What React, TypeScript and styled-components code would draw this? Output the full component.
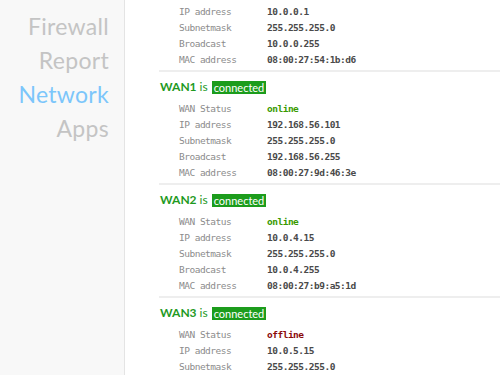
import styled, { createGlobalStyle } from 'styled-components';

const GlobalStyle = createGlobalStyle`
  html, body { margin: 0; padding: 0; background: #fff; }
  body { font-family: Lato, "Open Sans", sans-serif; overflow: hidden; }
`;

const Page = styled.div`
  display: flex;
  width: 500px;
  height: 375px;
  overflow: hidden;
`;

const Sidebar = styled.nav`
  width: 125px;
  flex-shrink: 0;
  background: #f8f8f8;
  border-right: 1px solid #e4e4e4;
  display: flex;
  flex-direction: column;
  align-items: flex-end;
  padding: 9px 15px 0 0;
  box-sizing: border-box;
`;

const NavItem = styled.a<{ $active?: boolean }>`
  font-family: Lato, "Open Sans", sans-serif;
  font-size: 23px;
  line-height: 34px;
  color: ${p => (p.$active ? '#7cc6fb' : '#c4c4c4')};
  text-decoration: none;
  letter-spacing: 0.3px;
`;

const Main = styled.main`
  flex: 1;
  padding-left: 34px;
  overflow: hidden;
`;

const Section = styled.section`
  border-bottom: 2px solid #eeeeee;
  padding-bottom: 3px;
  margin-bottom: 6px;
`;

const Header = styled.h3`
  margin: 0 0 4px 1px;
  font-family: Lato, "Open Sans", sans-serif;
  font-size: 12px;
  line-height: 18px;
  font-weight: 400;
  color: #1f9a1f;
  display: flex;
  align-items: center;
  gap: 3px;
`;

const Name = styled.b`
  font-weight: 700;
`;

const Badge = styled.span`
  background: #1c9c1c;
  color: #fff;
  font-size: 11px;
  line-height: 13px;
  padding: 0 2px;
  margin-left: 1px;
`;

const Rows = styled.div<{ $top?: number }>`
  padding-left: 20px;
  padding-top: ${p => p.$top ?? 0}px;
  display: grid;
  grid-template-columns: 88px 1fr;
  grid-auto-rows: 16px;
  align-items: center;
  font-family: "DejaVu Sans Mono", "Liberation Mono", monospace;
  font-size: 9.5px;
  letter-spacing: -0.5px;
`;

const Label = styled.span`
  color: #8c8c8c;
`;

const Value = styled.span<{ $tone?: 'online' | 'offline' }>`
  font-weight: 700;
  color: ${p => (p.$tone === 'online' ? '#3a9a00' : p.$tone === 'offline' ? '#8b0a0a' : '#4a4a4a')};
`;

type Row = [string, string, ('online' | 'offline')?];

const blocks: { name?: string; rows: Row[] }[] = [
  {
    rows: [
      ['IP address', '10.0.0.1'],
      ['Subnetmask', '255.255.255.0'],
      ['Broadcast', '10.0.0.255'],
      ['MAC address', '08:00:27:54:1b:d6'],
    ],
  },
  {
    name: 'WAN1',
    rows: [
      ['WAN Status', 'online', 'online'],
      ['IP address', '192.168.56.101'],
      ['Subnetmask', '255.255.255.0'],
      ['Broadcast', '192.168.56.255'],
      ['MAC address', '08:00:27:9d:46:3e'],
    ],
  },
  {
    name: 'WAN2',
    rows: [
      ['WAN Status', 'online', 'online'],
      ['IP address', '10.0.4.15'],
      ['Subnetmask', '255.255.255.0'],
      ['Broadcast', '10.0.4.255'],
      ['MAC address', '08:00:27:b9:a5:1d'],
    ],
  },
  {
    name: 'WAN3',
    rows: [
      ['WAN Status', 'offline', 'offline'],
      ['IP address', '10.0.5.15'],
      ['Subnetmask', '255.255.255.0'],
    ],
  },
];

export default function App() {
  return (
    <Page>
      <GlobalStyle />
      <Sidebar>
        <NavItem>Firewall</NavItem>
        <NavItem>Report</NavItem>
        <NavItem $active>Network</NavItem>
        <NavItem>Apps</NavItem>
      </Sidebar>
      <Main>
        {blocks.map((b, i) => (
          <Section key={i}>
            {b.name && (
              <Header>
                <Name>{b.name}</Name> is <Badge>connected</Badge>
              </Header>
            )}
            <Rows $top={b.name ? 0 : 3}>
              {b.rows.flatMap(([label, value, tone]) => [
                <Label key={label}>{label}</Label>,
                <Value key={label + 'v'} $tone={tone}>{value}</Value>,
              ])}
            </Rows>
          </Section>
        ))}
      </Main>
    </Page>
  );
}
